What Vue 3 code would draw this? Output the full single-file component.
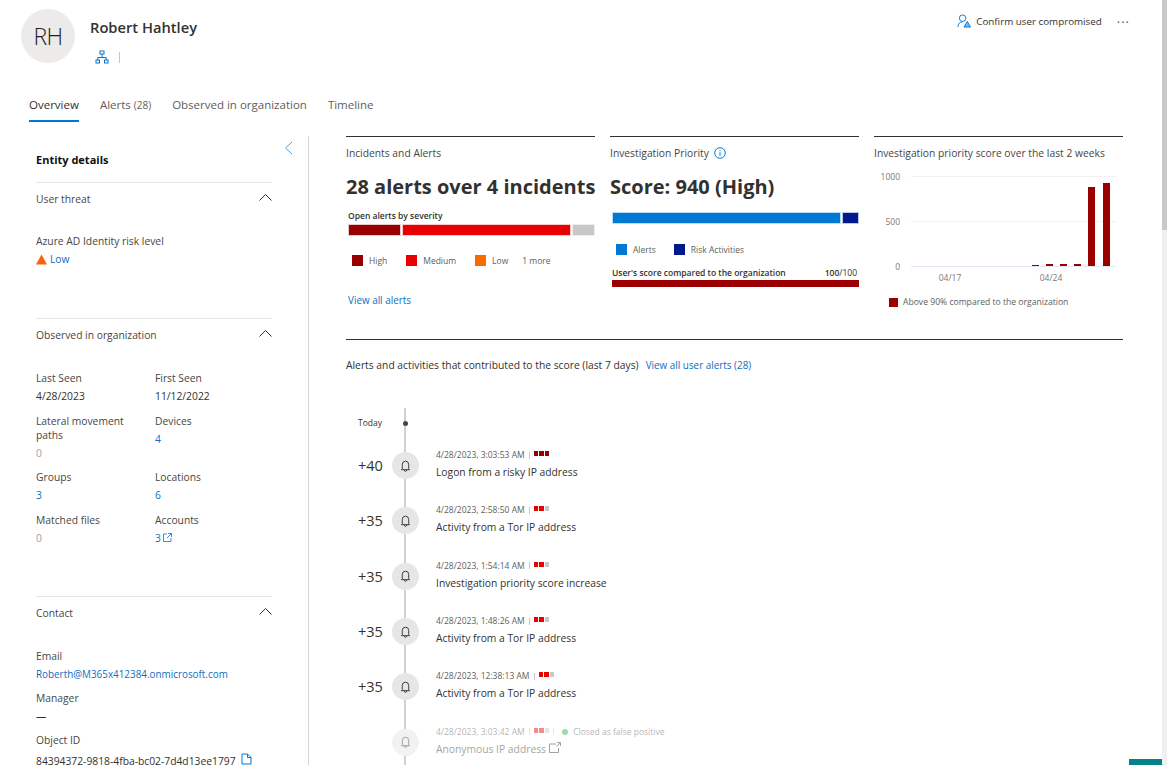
<script setup>
const observed = [
  { label: "Last Seen", value: "4/28/2023" },
  { label: "First Seen", value: "11/12/2022" },
  { label: "Lateral movement paths", value: "0", muted: true },
  { label: "Devices", value: "4", link: true },
  { label: "Groups", value: "3", link: true },
  { label: "Locations", value: "6", link: true },
  { label: "Matched files", value: "0", muted: true },
  { label: "Accounts", value: "3", link: true, external: true },
];

const timeline = [
  { score: "+40", time: "4/28/2023, 3:03:53 AM", title: "Logon from a risky IP address", level: "high" },
  { score: "+35", time: "4/28/2023, 2:58:50 AM", title: "Activity from a Tor IP address", level: "medium" },
  { score: "+35", time: "4/28/2023, 1:54:14 AM", title: "Investigation priority score increase", level: "medium" },
  { score: "+35", time: "4/28/2023, 1:48:26 AM", title: "Activity from a Tor IP address", level: "medium" },
  { score: "+35", time: "4/28/2023, 12:38:13 AM", title: "Activity from a Tor IP address", level: "medium" },
];

const bars = [
  { x: 158, top: 98 },
  { x: 172, top: 97 },
  { x: 186, top: 97 },
  { x: 200, top: 97 },
  { x: 214, top: 20 },
  { x: 229, top: 16 },
];
</script>

<template>
  <div class="page">
    <header class="head">
      <div class="avatar">RH</div>
      <div class="who">
        <h1>Robert Hahtley</h1>
        <div class="who-meta">
          <svg width="14" height="14" viewBox="0 0 14 14" fill="none" stroke="#0078d4" stroke-width="1">
            <rect x="5" y="1" width="4" height="3" />
            <rect x="1" y="10" width="3.500" height="3" />
            <rect x="9.500" y="10" width="3.500" height="3" />
            <path d="M7 4v3.500M2.750 10V7.500h8.500V10" />
          </svg>
          <span class="pipe"></span>
        </div>
      </div>
      <div class="actions">
        <svg width="14" height="14" viewBox="0 0 15 15" fill="none" stroke="#0078d4" stroke-width="1">
          <circle cx="6" cy="4.500" r="3.500" />
          <path d="M1 14c0-3.500 2-5.500 5-5.500" />
          <path d="M11 8l3.500 6h-7z" fill="#7fb8e6" />
        </svg>
        <span>Confirm user compromised</span>
        <span class="dots">···</span>
      </div>
    </header>

    <nav class="tabs">
      <a class="tab active">Overview</a>
      <a class="tab">Alerts <small>(28)</small></a>
      <a class="tab">Observed in organization</a>
      <a class="tab">Timeline</a>
    </nav>

    <div class="body">
      <aside class="side">
        <div class="side-top">
          <h2>Entity details</h2>
          <svg class="collapse" width="9" height="14" viewBox="0 0 9 14" fill="none" stroke="#0078d4" stroke-width="1">
            <path d="M8 1L1.500 7 8 13" />
          </svg>
        </div>

        <section class="sec sec-threat">
          <div class="sec-head">
            <span>User threat</span>
            <svg class="chev" width="13" height="7" viewBox="0 0 13 7" fill="none" stroke="#323130" stroke-width="1">
              <path d="M.5 6.500l6-6 6 6" />
            </svg>
          </div>
          <div class="field">
            <div class="lbl">Azure AD Identity risk level</div>
            <div class="val link risk">
              <svg width="11" height="11" viewBox="0 0 11 11"><path d="M5.500 .5L11 10.500H0z" fill="#f7630c" /></svg>
              Low
            </div>
          </div>
        </section>

        <section class="sec sec-observed">
          <div class="sec-head">
            <span>Observed in organization</span>
            <svg class="chev" width="13" height="7" viewBox="0 0 13 7" fill="none" stroke="#323130" stroke-width="1">
              <path d="M.5 6.500l6-6 6 6" />
            </svg>
          </div>
          <div class="obs-grid">
            <div v-for="item in observed" :key="item.label" class="obs-item">
              <div class="lbl">{{ item.label }}</div>
              <div class="val" :class="{ link: item.link, muted: item.muted }">
                {{ item.value }}<svg v-if="item.external" class="ext" width="9" height="9" viewBox="0 0 9 9" fill="none" stroke="#0078d4" stroke-width=".8">
                  <path d="M4 1H.5v7.500H8V5M5 .5h3.500V4M8.500 .5L4 5" />
                </svg>
              </div>
            </div>
          </div>
        </section>

        <section class="sec">
          <div class="sec-head">
            <span>Contact</span>
            <svg class="chev" width="13" height="7" viewBox="0 0 13 7" fill="none" stroke="#323130" stroke-width="1">
              <path d="M.5 6.500l6-6 6 6" />
            </svg>
          </div>
          <div class="contact">
            <div class="lbl">Email</div>
            <div class="val link email">Roberth@M365x412384.onmicrosoft.com</div>
            <div class="lbl">Manager</div>
            <div class="val">—</div>
            <div class="lbl">Object ID</div>
            <div class="val oid">
              84394372-9818-4fba-bc02-7d4d13ee1797
              <svg width="11" height="12" viewBox="0 0 11 12" fill="none" stroke="#0078d4" stroke-width="1">
                <path d="M1 1h5.500L10 4.500V11H1zM6.500 1v3.500H10" />
              </svg>
            </div>
          </div>
        </section>
      </aside>

      <main class="main">
        <div class="cards">
          <div class="card">
            <div class="card-title">Incidents and Alerts</div>
            <div class="big">28 alerts over 4 incidents</div>
            <div class="bar-label">Open alerts by severity</div>
            <div class="sev-bar">
              <i class="seg s-high" style="width: 53px"></i>
              <i class="seg s-med" style="width: 169px"></i>
              <i class="seg s-grey"></i>
            </div>
            <div class="legend sev-legend">
              <span class="key"><i class="sq" style="background: #9b0000"></i>High</span>
              <span class="key"><i class="sq" style="background: #e60000"></i>Medium</span>
              <span class="key"><i class="sq" style="background: #f76b00"></i>Low</span>
              <span class="key more">1 more</span>
            </div>
            <a class="link view-all">View all alerts</a>
          </div>

          <div class="card">
            <div class="card-title">
              Investigation Priority
              <svg class="info" width="12" height="12" viewBox="0 0 12 12" fill="none" stroke="#0078d4" stroke-width="1">
                <circle cx="6" cy="6" r="5.300" />
                <path d="M6 5.200v3.500M6 3.200v1" />
              </svg>
            </div>
            <div class="big">Score: 940 (High)</div>
            <div class="score-bar">
              <i class="seg s-blue" style="width: 229px"></i>
              <i class="seg s-navy"></i>
            </div>
            <div class="legend score-legend">
              <span class="key"><i class="sq" style="background: #0078d4"></i>Alerts</span>
              <span class="key"><i class="sq" style="background: #001a8c"></i>Risk Activities</span>
            </div>
            <div class="compare">
              <span>User's score compared to the organization</span>
              <span><b>100</b>/100</span>
            </div>
            <div class="compare-bar"></div>
          </div>

          <div class="card">
            <div class="card-title">Investigation priority score over the last 2 weeks</div>
            <svg class="chart" width="249" height="126" viewBox="0 0 249 126">
              <line x1="37" y1="9.500" x2="242" y2="9.500" stroke="#f3f2f1" />
              <line x1="37" y1="54.500" x2="242" y2="54.500" stroke="#f3f2f1" />
              <line x1="37" y1="99.500" x2="242" y2="99.500" stroke="#e3e6f3" />
              <text x="26" y="13" text-anchor="end">1000</text>
              <text x="26" y="58" text-anchor="end">500</text>
              <text x="26" y="103" text-anchor="end">0</text>
              <text x="76" y="114" text-anchor="middle">04/17</text>
              <text x="177" y="114" text-anchor="middle">04/24</text>
              <rect v-for="bar in bars" :key="bar.x" :x="bar.x" :y="bar.top" width="7" :height="99 - bar.top" fill="#9b0000" />
            </svg>
            <div class="legend chart-legend">
              <span class="key"><i class="sq" style="background: #9b0000"></i>Above 90% compared to the organization</span>
            </div>
          </div>
        </div>

        <div class="activity">
          <div class="activity-head">
            <span>Alerts and activities that contributed to the score (last 7 days)</span>
            <a class="link">View all user alerts (28)</a>
          </div>

          <div class="tl">
            <span class="tl-line"></span>
            <div class="tl-today">
              <span class="today-label">Today</span>
              <span class="tl-slot"><i class="tl-dot"></i></span>
            </div>
            <div v-for="row in timeline" :key="row.time" class="tl-row">
              <span class="tl-score">{{ row.score }}</span>
              <span class="tl-slot">
                <span class="bell">
                  <svg width="11" height="12" viewBox="0 0 12 13" fill="none" stroke="#323130" stroke-width="1">
                    <path d="M2.500 9.500V5a3.500 3.800 0 0 1 7 0v4.500l1 1h-9zM4.500 10.800c.2 1 .8 1.500 1.500 1.500s1.300-.5 1.500-1.500" />
                  </svg>
                </span>
              </span>
              <div class="tl-text">
                <div class="tl-time">
                  {{ row.time }}<span class="tl-sep"></span>
                  <span class="mini">
                    <i :class="row.level === 'high' ? 'm-high' : 'm-med'"></i>
                    <i :class="row.level === 'high' ? 'm-high' : 'm-med'"></i>
                    <i :class="row.level === 'high' ? 'm-high' : 'm-off'"></i>
                  </span>
                </div>
                <div class="tl-title">{{ row.title }}</div>
              </div>
            </div>
            <div class="tl-row faded">
              <span class="tl-score"></span>
              <span class="tl-slot">
                <span class="bell">
                  <svg width="11" height="12" viewBox="0 0 12 13" fill="none" stroke="#323130" stroke-width="1">
                    <path d="M2.500 9.500V5a3.500 3.800 0 0 1 7 0v4.500l1 1h-9zM4.500 10.800c.2 1 .8 1.500 1.500 1.500s1.300-.5 1.500-1.500" />
                  </svg>
                </span>
              </span>
              <div class="tl-text">
                <div class="tl-time">
                  4/28/2023, 3:03:42 AM<span class="tl-sep"></span>
                  <span class="mini">
                    <i class="m-med"></i><i class="m-med"></i><i class="m-off"></i>
                  </span>
                  <span class="tl-sep"></span>
                  <i class="status-dot"></i>Closed as false positive
                </div>
                <div class="tl-title">
                  Anonymous IP address
                  <svg width="12" height="11" viewBox="0 0 12 11" fill="none" stroke="#323130" stroke-width="1">
                    <path d="M7 2H.5v8.500h9V6M8 .5h3.500V4M11.500 .5L7.500 4.500" />
                  </svg>
                </div>
              </div>
            </div>
          </div>
        </div>
      </main>
    </div>

    <div class="scrollbar"><span></span></div>
    <div class="teal"></div>
  </div>
</template>

<style>
html,
body {
  margin: 0;
  overflow: hidden;
  background: #fff;
}
</style>

<style scoped>
.page {
  position: relative;
  height: 765px;
  overflow: hidden;
  font-family: "Open Sans", "Noto Sans", sans-serif;
  font-size: 10px;
  color: #323130;
  background: #fff;
}

.head {
  display: flex;
  height: 72px;
  padding: 9px 37px 0 21px;
  box-sizing: border-box;
}

.avatar {
  width: 54px;
  height: 54px;
  border-radius: 50%;
  background: #edebe9;
  display: flex;
  align-items: center;
  justify-content: center;
  font-size: 23px;
  font-weight: 300;
  letter-spacing: -0.5px;
  color: #201f1e;
}

.who {
  margin-left: 15px;
}

.who h1 {
  margin: 9px 0 0;
  font-size: 14.700px;
  line-height: 18px;
  font-weight: 600;
}

.who-meta {
  display: flex;
  align-items: center;
  margin: 14px 0 0 5px;
}

.pipe {
  width: 1px;
  height: 11px;
  margin-left: 10px;
  background: #c8c6c4;
}

.actions {
  display: flex;
  align-items: flex-start;
  margin-left: auto;
  gap: 5px;
  line-height: 26px;
  font-size: 9.800px;
}

.actions svg {
  margin-top: 5px;
}

.dots {
  margin-left: 10px;
  font-size: 13px;
  letter-spacing: 1px;
  color: #605e5c;
}

.tabs {
  display: flex;
  gap: 21px;
  height: 64px;
  padding: 15px 0 0 29px;
  box-sizing: border-box;
  font-size: 11.500px;
  color: #605e5c;
}

.tab {
  height: 35px;
  line-height: 18px;
  padding-top: 9px;
  box-sizing: border-box;
  position: relative;
}

.tab small {
  font-size: 10px;
}

.tab.active {
  color: #323130;
  border-bottom: 2px solid #0078d4;
  height: 35px;
}

.body {
  display: flex;
  height: 629px;
}

.side {
  width: 309px;
  box-sizing: border-box;
  padding: 0 36px 0 36px;
  border-right: 1px solid #d8d6d4;
  flex: none;
}

.side-top {
  position: relative;
  height: 46px;
}

.side-top h2 {
  margin: 0;
  padding-top: 15px;
  font-size: 11px;
  line-height: 18px;
  font-weight: 700;
  color: #11100f;
}

.collapse {
  position: absolute;
  right: -21px;
  top: 5px;
  opacity: 0.7;
}

.sec {
  border-top: 1px solid #e6e5e4;
  box-sizing: border-box;
}

.sec-threat {
  height: 136px;
}

.sec-observed {
  height: 278px;
}

.sec-head {
  display: flex;
  justify-content: space-between;
  align-items: center;
  height: 31px;
  font-size: 10.300px;
  color: #484644;
}

.chev {
  margin-top: -3px;
}

.lbl {
  color: #484644;
  font-size: 10.300px;
  line-height: 14px;
}

.val {
  font-size: 10.300px;
  line-height: 14px;
}

.link {
  color: #106ebe;
}

.muted {
  color: #a19f9d;
}

.field {
  margin-top: 20px;
}

.risk {
  margin-top: 4px;
  display: flex;
  align-items: center;
  gap: 3px;
}

.obs-grid {
  display: grid;
  grid-template-columns: 119px 1fr;
  margin-top: 21px;
  row-gap: 10.500px;
}

.obs-item {
  padding-right: 20px;
}

.obs-item .val {
  margin-top: 4px;
}

.ext {
  margin-left: 2px;
}

.contact {
  margin-top: 21px;
}

.contact .val {
  margin: 4px 0 10px;
}

.contact .email {
  font-size: 9.900px;
}

.contact .oid {
  margin-top: 6px;
  white-space: nowrap;
}

.oid svg {
  margin-left: 3px;
}

.main {
  flex: 1;
  min-width: 0;
  padding-left: 37px;
}

.cards {
  display: grid;
  grid-template-columns: repeat(3, 249px);
  column-gap: 15px;
  width: 777px;
  height: 203px;
  border-bottom: 1px solid #323130;
}

.card {
  border-top: 1px solid #323130;
  min-width: 0;
  position: relative;
}

.card-title {
  display: flex;
  align-items: center;
  height: 32px;
  font-size: 10.300px;
  color: #484644;
}

.info {
  margin-left: 5px;
}

.big {
  margin-top: 3px;
  font-size: 20px;
  line-height: 30px;
  font-weight: 700;
  white-space: nowrap;
}

.bar-label {
  margin: 8px 0 0 2px;
  font-size: 8.500px;
  line-height: 12px;
  font-weight: 600;
}

.sev-bar,
.score-bar {
  display: flex;
  gap: 1px;
  height: 12px;
  margin-left: 2px;
}

.sev-bar {
  margin-top: 2px;
}

.score-bar {
  margin-top: 10px;
}

.seg {
  display: block;
  box-sizing: border-box;
  height: 100%;
  border: 1px solid #fff;
}

.s-high {
  background: #9b0000;
  border-color: #e9c9c9;
}

.s-med {
  background: #e60000;
  border-color: #f8c9c9;
}

.s-grey {
  flex: 1;
  background: #c8c8c8;
  border-color: #ececec;
}

.s-blue {
  background: #0078d4;
  border-color: #b9dcf4;
}

.s-navy {
  flex: 1;
  background: #001a8c;
  border-color: #bcc4e4;
}

.legend {
  display: flex;
  font-size: 8.500px;
  color: #605e5c;
}

.key {
  display: flex;
  align-items: center;
}

.sq {
  display: block;
  width: 11px;
  height: 11px;
  margin-right: 6px;
}

.sev-legend {
  margin: 19px 0 0 6px;
  gap: 19px;
}

.more {
  margin-left: -5px;
}

.view-all {
  display: block;
  margin: 27px 0 0 2px;
  font-size: 9.900px;
}

.score-legend {
  margin: 20px 0 0 6px;
  gap: 18px;
}

.compare {
  display: flex;
  justify-content: space-between;
  margin: 12px 2px 0 2px;
  font-size: 8.500px;
  line-height: 12px;
  font-weight: 600;
}

.compare span:last-child {
  font-weight: 400;
}

.compare b {
  font-weight: 600;
}

.compare-bar {
  height: 7px;
  margin: 1px 0 0 2px;
  background: #9b0000;
}

.chart {
  display: block;
  margin-top: -2px;
  font-size: 8.500px;
}

.chart text {
  fill: #7a7876;
}

.chart-legend {
  margin: 3px 0 0 15px;
  font-size: 8.600px;
}

.chart-legend .sq {
  width: 9px;
  height: 9px;
  margin-right: 5px;
}

.activity-head {
  display: flex;
  gap: 7px;
  margin-top: 18px;
  font-size: 10.300px;
  line-height: 14px;
}

.activity-head .link {
  font-size: 9.900px;
}

.tl {
  position: relative;
  margin-top: 36px;
}

.tl-line {
  position: absolute;
  left: 58px;
  top: 0;
  bottom: -30px;
  width: 2px;
  background: #d2d0ce;
}

.tl-today {
  display: flex;
  height: 15px;
  padding-top: 15px;
  box-sizing: content-box;
}

.today-label {
  width: 46px;
  padding-left: 12px;
  box-sizing: border-box;
  font-size: 8.500px;
  line-height: 0;
  padding-top: 0;
}

.tl-slot {
  position: relative;
  display: flex;
  justify-content: center;
  align-items: center;
  width: 27px;
  flex: none;
}

.today-label,
.tl-today .tl-slot {
  height: 0;
}

.tl-dot {
  width: 5px;
  height: 5px;
  border-radius: 50%;
  background: #484644;
}

.tl-row {
  display: flex;
  align-items: center;
  height: 55.300px;
}

.tl-score {
  width: 46px;
  padding-left: 12px;
  box-sizing: border-box;
  font-size: 14.500px;
  flex: none;
}

.bell {
  width: 27px;
  height: 27px;
  border-radius: 50%;
  background: #e6e6e6;
  display: flex;
  align-items: center;
  justify-content: center;
}

.tl-text {
  margin: -3px 0 0 17px;
}

.tl-time {
  display: flex;
  align-items: center;
  font-size: 8.500px;
  line-height: 12px;
  color: #605e5c;
}

.tl-sep {
  width: 1px;
  height: 7px;
  margin: 0 4px;
  background: #c8c6c4;
}

.mini {
  display: flex;
  gap: 1px;
  margin-top: -3px;
}

.mini i {
  display: block;
  width: 4.500px;
  height: 5px;
}

.m-high {
  background: #9b0000;
}

.m-med {
  background: #e60000;
}

.m-off {
  background: #c8c8c8;
}

.tl-title {
  margin-top: 4px;
  font-size: 10.300px;
  line-height: 14px;
}

.faded .tl-text,
.faded .bell svg {
  opacity: 0.45;
}

.faded .bell {
  background: #f2f2f2;
}

.status-dot {
  display: block;
  width: 6px;
  height: 6px;
  border-radius: 50%;
  background: #2fa84f;
  margin: 0 5px 0 4px;
}

.scrollbar {
  position: absolute;
  top: 0;
  right: 0;
  bottom: 0;
  width: 5px;
  background: #f0f0f0;
}

.scrollbar span {
  display: block;
  height: 230px;
  background: #c8c8c8;
}

.teal {
  position: absolute;
  right: 5px;
  bottom: 0;
  width: 33px;
  height: 6px;
  background: #038387;
}
</style>
